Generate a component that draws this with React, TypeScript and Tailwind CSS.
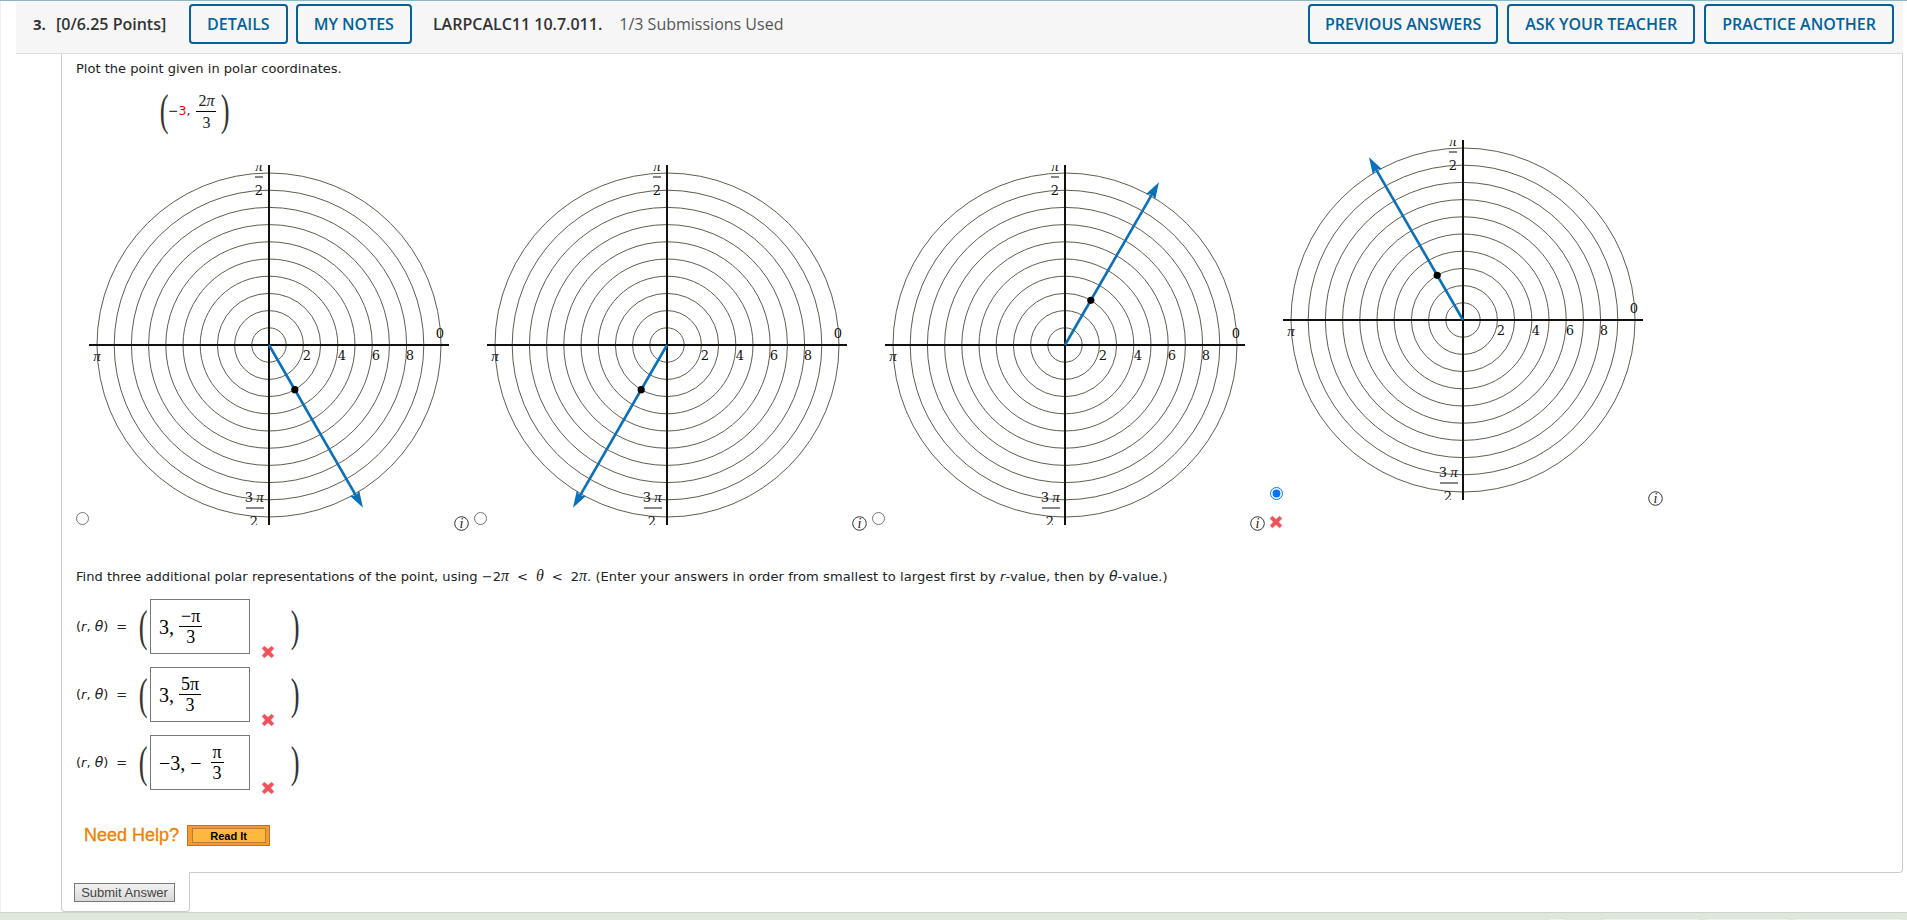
import type { ReactNode } from 'react';

const STEP = 17.2;
const RINGS = [1, 2, 3, 4, 5, 6, 7, 8, 9, 10];

const SERIF = "font-['Liberation_Serif',serif]";

// ray angle in degrees, svg coords (clockwise from +x)
function PolarGraph({ angle }: { angle: number }) {
  const rad = (angle * Math.PI) / 180;
  const dotX = 180 + 3 * STEP * Math.cos(rad);
  const dotY = 180 + 3 * STEP * Math.sin(rad);
  return (
    <svg width="360" height="360" viewBox="0 0 360 360" className="block shrink-0">
      {RINGS.map((k) => (
        <circle key={k} cx="180" cy="180" r={k * STEP} fill="none" stroke="#625c4e" strokeWidth="1" />
      ))}
      <line x1="0" y1="180" x2="360" y2="180" stroke="#111" strokeWidth="2" />
      <line x1="180" y1="0" x2="180" y2="360" stroke="#111" strokeWidth="2" />
      <g fontFamily="'DejaVu Serif', serif" fontSize="13" fill="#111" textAnchor="middle">
        <text x="218" y="195">2</text>
        <text x="253" y="195">4</text>
        <text x="287" y="195">6</text>
        <text x="321" y="195">8</text>
        <text x="351" y="173">0</text>
        <text x="8" y="196" fontFamily="'Liberation Serif', serif" fontStyle="italic" fontSize="15">π</text>
        <text x="170" y="6" fontFamily="'Liberation Serif', serif" fontStyle="italic" fontSize="15">π</text>
        <line x1="166" y1="12" x2="174" y2="12" stroke="#111" strokeWidth="1" />
        <text x="170" y="30">2</text>
        <text x="160" y="337">3</text>
        <text x="171" y="337" fontFamily="'Liberation Serif', serif" fontStyle="italic" fontSize="15">π</text>
        <line x1="157" y1="343" x2="175" y2="343" stroke="#111" strokeWidth="1" />
        <text x="165" y="361">2</text>
      </g>
      <g transform={`rotate(${angle} 180 180)`}>
        <line x1="180" y1="180" x2="358" y2="180" stroke="#0a70b8" strokeWidth="2.6" />
        <polygon points="368,180 351,174.6 354,180 351,185.4" fill="#0a70b8" />
      </g>
      <circle cx={dotX} cy={dotY} r="3.6" fill="#000" />
    </svg>
  );
}

function InfoIcon() {
  return (
    <svg width="15" height="15" viewBox="0 0 15 15" className="block">
      <circle cx="7.5" cy="7.5" r="6.8" fill="#fff" stroke="#333" strokeWidth="1" />
      <text x="7.5" y="11.5" textAnchor="middle" fontFamily="'Liberation Serif', serif" fontStyle="italic" fontSize="14" fill="#222">
        i
      </text>
    </svg>
  );
}

function RedX() {
  return (
    <svg width="14" height="14" viewBox="0 0 14 14" className="block">
      <path
        d="M1 3.4 3.4 1 7 4.2 10.6 1 13 3.4 9.8 7 13 10.6 10.6 13 7 9.8 3.4 13 1 10.6 4.2 7Z"
        fill="#f0505a"
        stroke="#f58a8f"
        strokeWidth="0.5"
      />
    </svg>
  );
}

function Frac({
  top,
  bottom,
  className,
  line = 'leading-[20px]',
}: {
  top: ReactNode;
  bottom: ReactNode;
  className?: string;
  line?: string;
}) {
  return (
    <span className={`inline-flex flex-col items-center ${className ?? ''}`}>
      <span className={`${line} px-[2px]`}>{top}</span>
      <span className={`${line} w-full border-t border-black text-center`}>{bottom}</span>
    </span>
  );
}

function BigParen({ children }: { children: string }) {
  return (
    <span className={`${SERIF} inline-block w-[9px] text-center text-[44px] leading-[44px] font-light scale-x-[0.6] text-[#333]`}>
      {children}
    </span>
  );
}

function HeaderButton({ children, tight }: { children: string; tight?: boolean }) {
  return (
    <button
      className={`h-[40px] ${tight ? 'px-[15px]' : 'px-4'} border-2 border-[#04629a] rounded-[4px] text-[16px] font-semibold uppercase text-[#04629a] bg-[#f6f6f6]`}
    >
      {children}
    </button>
  );
}

function GraphCell({ angle, offset, selected }: { angle: number; offset: string; selected?: boolean }) {
  return (
    <div className={`flex w-[398px] shrink-0 ${offset}`}>
      <div className="w-[14px] shrink-0">
        <div className="mt-[347px] flex justify-center">
          <input type="radio" name="plot" defaultChecked={selected} className="m-0 w-[13px] h-[13px]" />
        </div>
        {selected && (
          <div className="mt-[15px]">
            <RedX />
          </div>
        )}
      </div>
      <PolarGraph angle={angle} />
      <div className="pl-[5px] pt-[351px]">
        <InfoIcon />
      </div>
    </div>
  );
}

function AnswerRow({ children, bar }: { children: ReactNode; bar?: boolean }) {
  return (
    <div className={`flex h-[55px] items-center ${bar ? 'mb-[13px]' : ''}`}>
      <span className="w-[61px] shrink-0 text-[13px] whitespace-nowrap">
        (<i>r</i>, <i className="text-[14px]">θ</i>)<span className="ml-[8px]">=</span>
      </span>
      <BigParen>(</BigParen>
      <div className={`${SERIF} ml-[4px] flex h-[55px] w-[100px] shrink-0 items-center border border-[#777] pl-[8px] text-[20px] text-black whitespace-nowrap`}>
        {children}
      </div>
      <div className="ml-[11px] mt-[50px] shrink-0">
        <RedX />
      </div>
      <span className="ml-[14px]">
        <BigParen>)</BigParen>
      </span>
    </div>
  );
}

export default function App() {
  return (
    <div className="flex h-[920px] w-[1907px] flex-col overflow-hidden bg-white font-['DejaVu_Sans',sans-serif] text-[13.05px] text-[#222]">
      <div className="h-px shrink-0 bg-[#8db7bf]" />
      <div className="flex-1 border-l border-[#eee] pl-[15px] pr-[4px]">
        {/* Header bar */}
        <div className="flex items-center border-b border-[#ddd] bg-[#f6f6f6] pt-[3px] pb-[9px] pr-[9px] font-['Open_Sans',sans-serif]">
          <span className="ml-[17px] w-[23px] text-[15px] font-bold text-[#333]">3.</span>
          <span className="w-[133px] whitespace-nowrap text-[16px] font-semibold text-[#333]">[0/6.25 Points]</span>
          <div className="flex gap-[8px]">
            <HeaderButton>Details</HeaderButton>
            <HeaderButton>My Notes</HeaderButton>
          </div>
          <span className="ml-[21px] text-[16px] font-semibold text-[#333]">LARPCALC11 10.7.011.</span>
          <span className="ml-[17px] text-[16px] text-[#555]">1/3 Submissions Used</span>
          <div className="ml-auto flex gap-[9px]">
            <HeaderButton tight>Previous Answers</HeaderButton>
            <HeaderButton>Ask Your Teacher</HeaderButton>
            <HeaderButton>Practice Another</HeaderButton>
          </div>
        </div>

        {/* Question body */}
        <div className="ml-[45px] h-[819px] border-x border-b border-[#ccc] rounded-br-[4px] pl-[14px] pt-[7px]">
          <p className="leading-[16px]">Plot the point given in polar coordinates.</p>

          <div className="ml-[82px] mt-[15px] flex h-[38px] items-center">
            <BigParen>(</BigParen>
            <span className="ml-[1px] text-[12.5px] leading-none">
              −<span className="text-[#f00000]">3</span>,
            </span>
            <Frac
              className={`${SERIF} ml-[6px] text-[16px]`}
              line="leading-[21px]"
              top={
                <>
                  2<i>π</i>
                </>
              }
              bottom="3"
            />
            <span className="ml-[3px]">
              <BigParen>)</BigParen>
            </span>
          </div>

          <div className="-ml-px mt-[10px] flex">
            <GraphCell angle={60} offset="mt-[25px]" />
            <GraphCell angle={120} offset="mt-[25px]" />
            <GraphCell angle={-60} offset="mt-[25px]" />
            <GraphCell angle={-120} offset="" selected />
          </div>

          <p className="mt-[37px] leading-[16px] whitespace-nowrap">
            Find three additional polar representations of the point, using −2
            <i className={`${SERIF} text-[16px]`}>π</i>
            <span className="mx-[8px]">&lt;</span>
            <i className={`${SERIF} text-[16px]`}>θ</i>
            <span className="mx-[8px]">&lt;</span>2<i className={`${SERIF} text-[16px]`}>π</i>.{' '}
            <span className="tracking-[0.07px]">
              (Enter your answers in order from smallest to largest first by <i>r</i>-value, then by{' '}
              <i className="text-[14px]">θ</i>-value.)
            </span>
          </p>

          <div className="mt-[14px]">
            <AnswerRow bar>
              3,
              <Frac className="ml-[5px] text-[18px]" top="−π" bottom="3" />
            </AnswerRow>
            <AnswerRow bar>
              3,
              <Frac className="ml-[5px] text-[18px]" top="5π" bottom="3" />
            </AnswerRow>
            <AnswerRow>
              −3, −
              <Frac className="ml-[9px] text-[18px]" top="π" bottom="3" />
            </AnswerRow>
          </div>

          <div className="ml-[8px] mt-[32px] flex items-center font-['Liberation_Sans',sans-serif]">
            <span className="text-[18px] text-[#f08000] [-webkit-text-stroke:0.3px_#f08000]">Need Help?</span>
            <button className="ml-[8px] flex h-[21px] w-[83px] items-center justify-center border border-[#b0763a] bg-[#f79a2c]">
              <span className="block h-[15px] w-[74px] border border-[#b57f33] bg-[#ffb83f] text-[11px] font-bold leading-[14px] text-black">
                Read It
              </span>
            </button>
          </div>
        </div>

        {/* Submit tab */}
        <div className="relative ml-[45px] -mt-px h-[40px] w-[129px] border-x border-b border-[#ccc] bg-white pl-[12px] pt-[11px] rounded-b-[4px]">
          <button className="h-[19px] w-[101px] border border-[#777] bg-gradient-to-b from-[#f2f2f2] to-[#d9d9d9] font-['Liberation_Sans',sans-serif] text-[13px] leading-[17px] text-[#444]">
            Submit Answer
          </button>
        </div>
      </div>

      {/* Footer strip */}
      <div className="flex h-[8px] shrink-0 items-end border-t border-[#cdd5c9] bg-[#dfe6dc] pr-[7px]">
        <div className="ml-auto flex gap-[9px]">
          <div className="h-px w-[13px] bg-[#eef2ec]" />
          <div className="ml-[33px] h-px w-[93px] bg-[#eef2ec]" />
          <div className="h-px w-[80px] bg-[#eef2ec]" />
          <div className="h-px w-[104px] bg-[#eef2ec]" />
        </div>
      </div>
    </div>
  );
}
